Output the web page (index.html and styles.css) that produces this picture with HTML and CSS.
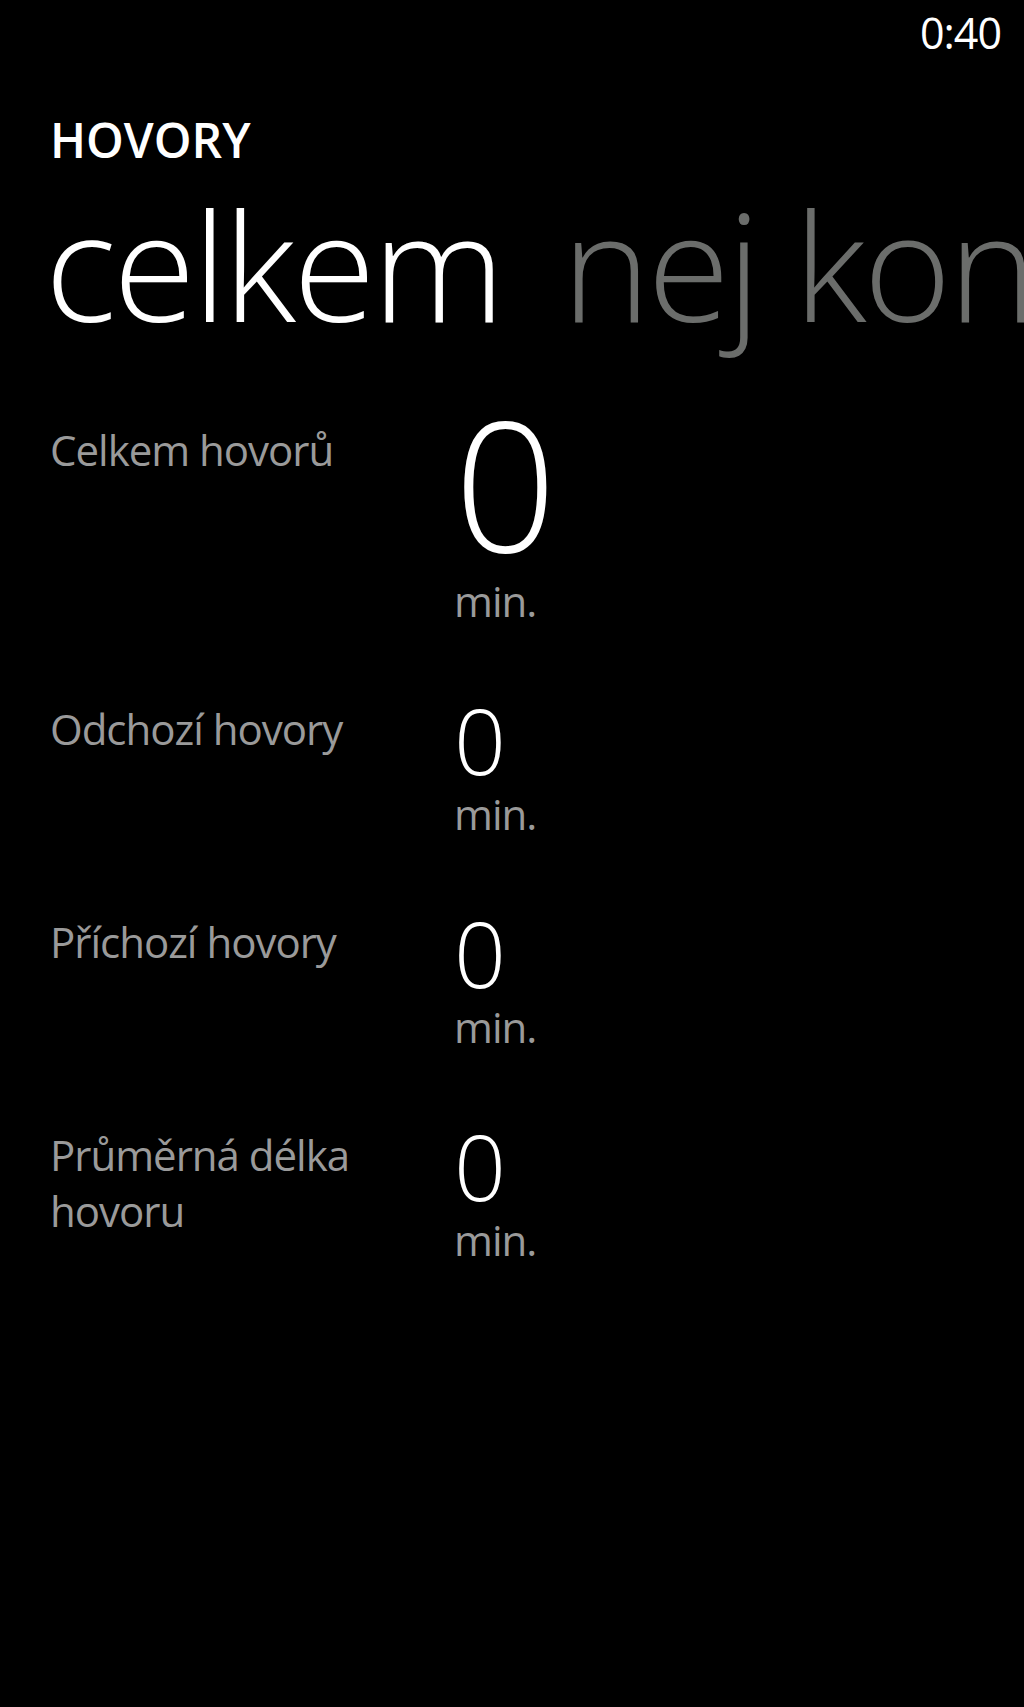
FILE: index.html
```html
<!DOCTYPE html>
<html lang="cs">
<head>
<meta charset="utf-8">
<title>Hovory</title>
<link rel="stylesheet" href="styles.css">
</head>
<body>
<div class="phone">
  <div class="status-bar"><span class="clock">0:40</span></div>
  <div class="app-title">HOVORY</div>
  <div class="pivot-headers">
    <span class="pivot-item active">celkem</span>
    <span class="pivot-item">nej kontakty</span>
  </div>
  <div class="stats">
    <div class="stat stat-large">
      <div class="stat-label">Celkem hovorů</div>
      <div class="stat-value">
        <div class="stat-number">0</div>
        <div class="stat-unit">min.</div>
      </div>
    </div>
    <div class="stat">
      <div class="stat-label">Odchozí hovory</div>
      <div class="stat-value">
        <div class="stat-number">0</div>
        <div class="stat-unit">min.</div>
      </div>
    </div>
    <div class="stat">
      <div class="stat-label">Příchozí hovory</div>
      <div class="stat-value">
        <div class="stat-number">0</div>
        <div class="stat-unit">min.</div>
      </div>
    </div>
    <div class="stat">
      <div class="stat-label">Průměrná délka<br>hovoru</div>
      <div class="stat-value">
        <div class="stat-number">0</div>
        <div class="stat-unit">min.</div>
      </div>
    </div>
  </div>
</div>
</body>
</html>
```

FILE: styles.css
```css
html, body {
  margin: 0;
  padding: 0;
  background: #000;
}

body {
  font-family: "Open Sans", "Noto Sans", "DejaVu Sans", sans-serif;
  color: #fff;
}

.phone {
  width: 1024px;
  height: 1707px;
  overflow: hidden;
  background: #000;
}

.status-bar {
  display: flex;
  justify-content: flex-end;
  padding: 3px 23px 0 0;
  height: 60px;
}

.clock {
  font-size: 43px;
  line-height: 60px;
  font-weight: 400;
  letter-spacing: -1px;
  color: #fff;
}

.app-title {
  margin-top: 53px;
  padding-left: 50px;
  font-size: 48px;
  line-height: 48px;
  font-weight: 600;
}

.pivot-headers {
  margin-top: -3px;
  padding-left: 45px;
  display: flex;
  white-space: nowrap;
  overflow: hidden;
  font-size: 150px;
  line-height: 206px;
  font-weight: 300;
  letter-spacing: -3px;
}

.pivot-item {
  margin-right: 60px;
  color: #6b6d6b;
  flex: none;
}

.pivot-item.active {
  color: #fff;
}

.stats {
  margin-top: 26px;
  padding-left: 50px;
  display: flex;
  flex-direction: column;
  gap: 66px;
}

.stat {
  display: grid;
  grid-template-columns: 404px 1fr;
  align-items: start;
}

.stat-label {
  margin-top: 6px;
  font-size: 42px;
  line-height: 56px;
  letter-spacing: -1px;
  color: #9a9a9a;
}

.stat-large .stat-label {
  margin-top: 29px;
}

.stat-number {
  font-size: 91px;
  line-height: 91px;
  font-weight: 300;
  color: #fff;
}

.stat-large .stat-number {
  font-size: 180px;
  line-height: 180px;
  letter-spacing: -4px;
}

.stat-unit {
  font-size: 42px;
  line-height: 56px;
  letter-spacing: -1px;
  color: #9a9a9a;
}
```
